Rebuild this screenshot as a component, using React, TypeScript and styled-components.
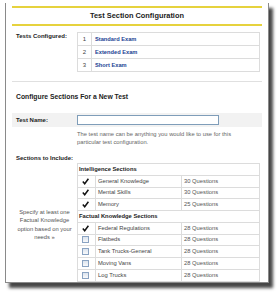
import React, {ReactElement} from "react";
import styled, {createGlobalStyle} from "styled-components";

interface TestItem {
  num: number
  name: string
}

interface SectionItem {
  name: string
  questions: number
  checked: boolean
}

interface SectionGroup {
  title: string
  items: SectionItem[]
}

const tests: TestItem[] = [
  {num: 1, name: "Standard Exam"},
  {num: 2, name: "Extended Exam"},
  {num: 3, name: "Short Exam"},
]

const groups: SectionGroup[] = [
  {
    title: "Intelligence Sections",
    items: [
      {name: "General Knowledge", questions: 30, checked: true},
      {name: "Mental Skills", questions: 30, checked: true},
      {name: "Memory", questions: 25, checked: true},
    ],
  },
  {
    title: "Factual Knowledge Sections",
    items: [
      {name: "Federal Regulations", questions: 28, checked: true},
      {name: "Flatbeds", questions: 28, checked: false},
      {name: "Tank Trucks-General", questions: 28, checked: false},
      {name: "Moving Vans", questions: 28, checked: false},
      {name: "Log Trucks", questions: 28, checked: false},
    ],
  },
]

const CheckMark = (): ReactElement => (
  <svg width="7" height="7" viewBox="0 0 7 7">
    <path d="M0.8 3.6 L2.7 5.8 L6.4 0.8" fill="none" stroke="#111" strokeWidth="1.5"/>
  </svg>
)

const App = (): ReactElement => (
  <Page>
    <GlobalStyle/>
    <Panel>
      <TitleBar>Test Section Configuration</TitleBar>

      <TestsRow>
        <Label>Tests Configured:</Label>
        <TestsTable>
          <tbody>
          {tests.map(t => (
            <tr key={t.num}>
              <NumCell>{t.num}</NumCell>
              <LinkCell><TestLink href="#">{t.name}</TestLink></LinkCell>
            </tr>
          ))}
          </tbody>
        </TestsTable>
      </TestsRow>

      <Divider/>

      <Heading>Configure Sections For a New Test</Heading>

      <NameBand>
        <Label>Test Name:</Label>
        <NameInput type="text"/>
      </NameBand>

      <Help>
        The test name can be anything you would like to use for this<br/>
        particular test configuration.
      </Help>

      <SectionsLabel>Sections to Include:</SectionsLabel>

      <SectionsRow>
        <Note>
          Specify at least one<br/>
          Factual Knowledge<br/>
          option based on your<br/>
          needs »
        </Note>
        <SectionsTable>
          <colgroup>
            <col style={{width: 18}}/>
            <col style={{width: 86}}/>
            <col/>
          </colgroup>
          <tbody>
          {groups.map(g => (
            <React.Fragment key={g.title}>
              <tr>
                <GroupCell colSpan={3}>{g.title}</GroupCell>
              </tr>
              {g.items.map(item => (
                <tr key={item.name}>
                  <CheckCell>{item.checked ? <CheckMark/> : <Box/>}</CheckCell>
                  <ItemCell>{item.name}</ItemCell>
                  <QuestionCell>{item.questions} Questions</QuestionCell>
                </tr>
              ))}
            </React.Fragment>
          ))}
          </tbody>
        </SectionsTable>
      </SectionsRow>
    </Panel>
  </Page>
)

export default App

const GlobalStyle = createGlobalStyle`
  html, body {
    margin: 0;
    padding: 0;
    background: #fff;
  }
  body {
    font-family: "Liberation Sans", Arial, sans-serif;
  }
`

const Page = styled.div`
  width: 279px;
  height: 293px;
  box-sizing: border-box;
  padding: 3px 0 0 5px;
  overflow: hidden;
`

const Panel = styled.div`
  width: 264px;
  height: 280px;
  box-sizing: border-box;
  border: 1px solid #8a8a8a;
  border-top: none;
  box-shadow: 4px 5px 3px rgba(0, 0, 0, 0.72);
  background: #fff;
  padding: 3px 6px 0;
  overflow: hidden;
`

const TitleBar = styled.div`
  border-top: 2px solid #e6d23e;
  border-bottom: 2px solid #e6d23e;
  height: 16px;
  line-height: 15px;
  text-align: center;
  font-size: 7.4px;
  font-weight: bold;
  color: #222;
`

const Label = styled.div`
  padding-left: 4px;
  font-size: 6px;
  font-weight: bold;
  color: #222;
`

const TestsRow = styled.div`
  display: grid;
  grid-template-columns: 65px 183px;
  margin-top: 6px;

  ${Label} {
    line-height: 6px;
    padding-top: 1px;
  }
`

const TestsTable = styled.table`
  border-collapse: collapse;
  width: 183px;
  font-size: 6px;
  line-height: 8px;

  td {
    border: 1px solid #dcdcdc;
    height: 12px;
    padding: 0;
  }
`

const NumCell = styled.td`
  width: 13px;
  text-align: center;
  color: #444;
`

const LinkCell = styled.td`
  padding-left: 3px !important;
`

const TestLink = styled.a`
  font-size: 5.7px;
  font-weight: bold;
  color: #1b3f93;
  text-decoration: none;
`

const Divider = styled.div`
  margin-top: 9px;
  border-top: 1px solid #e0e0e0;
`

const Heading = styled.div`
  margin-top: 10px;
  padding-left: 4px;
  line-height: 10px;
  font-size: 6.8px;
  font-weight: bold;
  color: #222;
`

const NameBand = styled.div`
  display: grid;
  grid-template-columns: 65px 142px;
  align-items: center;
  margin-top: 11px;
  height: 14px;
  background: #f2f2f2;
`

const NameInput = styled.input`
  box-sizing: border-box;
  width: 142px;
  height: 10px;
  margin: 0;
  padding: 0;
  border: 1px solid #7f9db9;
  background: #fff;
`

const Help = styled.div`
  margin-top: 3px;
  padding-left: 65px;
  line-height: 8px;
  font-size: 5.8px;
  color: #666;
`

const SectionsLabel = styled(Label)`
  margin-top: 7.5px;
  line-height: 8px;
`

const SectionsRow = styled.div`
  display: grid;
  grid-template-columns: 65px 183px;
  align-items: start;
  margin-top: 1.5px;
`

const Note = styled.div`
  padding-top: 45px;
  text-align: center;
  line-height: 8.3px;
  font-size: 5.8px;
  color: #555;
`

const SectionsTable = styled.table`
  border-collapse: collapse;
  width: 183px;
  table-layout: fixed;
  font-size: 5.8px;
  line-height: 7px;

  td {
    border: 1px solid #dcdcdc;
    height: 10.75px;
    padding: 0;
    white-space: nowrap;
  }
`

const GroupCell = styled.td`
  padding-left: 1px !important;
  font-weight: bold;
  color: #222;
`

const CheckCell = styled.td`
  text-align: center;
  line-height: 0 !important;

  svg {
    display: inline-block;
    vertical-align: middle;
    margin-left: -2px;
  }
`

const Box = styled.span`
  display: inline-block;
  vertical-align: middle;
  box-sizing: border-box;
  width: 7px;
  height: 7px;
  margin-left: -2px;
  border: 1px solid #8aa3c2;
  background: linear-gradient(#dce4ee, #f8f9fb);
`

const ItemCell = styled.td`
  padding-left: 2px !important;
  color: #444;
`

const QuestionCell = styled.td`
  padding-left: 2px !important;
  color: #555;
`
